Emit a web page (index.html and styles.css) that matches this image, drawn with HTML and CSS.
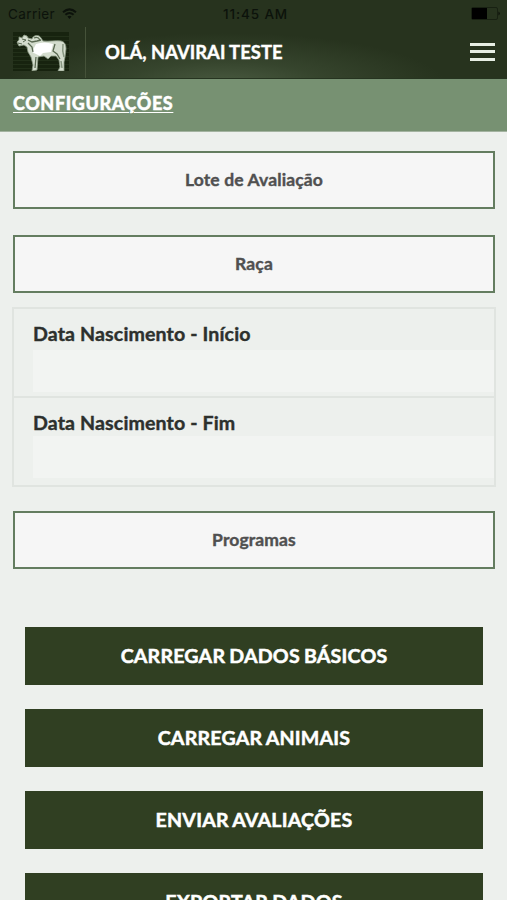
FILE: index.html
```html
<!DOCTYPE html>
<html lang="pt-BR">
<head>
<meta charset="utf-8">
<meta name="viewport" content="width=device-width">
<title>Configurações</title>
<link rel="stylesheet" href="styles.css">
</head>
<body>
<div class="app">
  <header class="header">
    <div class="status">
      <div class="carrier"><span>Carrier</span>
        <svg width="15" height="12" viewBox="0 0 15 12" fill="none" stroke="#0c120b" stroke-width="2"><path d="M1 4.2Q7.500-1.500 14 4.200M3.400 6.800Q7.500 3.200 11.600 6.800"/><path d="M5.400 8.600Q7.500 7 9.600 8.600L7.500 11Z" fill="#0c120b" stroke="none"/></svg>
      </div>
      <span class="clock">11:45 AM</span>
      <svg class="battery" width="30" height="13" viewBox="0 0 30 13"><rect x=".5" y=".5" width="26" height="12" rx="1.500" fill="none" stroke="#182112"/><path d="M1 1H16V12H1Z" fill="#000"/><path d="M27.500 4.500Q30 6.500 27.500 8.500Z" fill="#080d06"/></svg>
    </div>
    <div class="nav">
      <svg class="logo" width="56" height="39" viewBox="0 0 56 39">
        <path d="M0 0H56V39H0Z" fill="#17230f"/>
        <path d="M0 4.500H56M0 8.500H56M0 12.500H56M0 16.500H56M0 20.500H56M0 24.500H56M0 28.500H56M0 32.500H56M0 36.500H56" stroke="#223019"/>
        <path d="M4 10L6 8L6 5L9 6L11 3L14 4L15 6L19 7C20 3 26 2 28 6L30 9C36 10 42 8 48 9C52 10 53 13 53 17L52 25L51 30L51 39H45L47 35L46 28L43 24L38 24L35 27L31 24L25 25L24 38L19 39L20 33L18 25L15 20L14 15L11 13L6 14Z" fill="#d3dccd" stroke="#8b9b84" stroke-width=".8" stroke-linejoin="round"/>
        <path d="M23 12Q31 9 40 12L38 20L30 21L27 24L19 20Z" fill="#fff"/>
        <path d="M15 8L19 10L24 9L28 8M15 11L19 15L20 20M21 6Q25 4 27 8M42 12L40 19L44 22L47 27M23 25L22 36" fill="none" stroke="#596850" stroke-width="1.300"/>
        <path d="M50 12Q49 19 51 25M48 29L49 36" fill="none" stroke="#879681" stroke-width="1.500"/>
        <path d="M9 7L13 8L10 10M5 11L9 12" fill="none" stroke="#56654f"/>
      </svg>
      <div class="divider"></div>
      <h1 class="greeting">OLÁ, NAVIRAI TESTE</h1>
      <div class="menu"><i></i><i></i><i></i></div>
    </div>
  </header>
  <div class="titlebar"><a class="title">CONFIGURAÇÕES</a></div>
  <main class="content">
    <div class="select">Lote de Avaliação</div>
    <div class="select second">Raça</div>
    <div class="dates">
      <div class="date"><label>Data Nascimento - Início</label><div class="field"></div></div>
      <div class="date"><label class="end">Data Nascimento - Fim</label><div class="field"></div></div>
    </div>
    <div class="select">Programas</div>
    <div class="actions">
      <div class="action">CARREGAR DADOS BÁSICOS</div>
      <div class="action">CARREGAR ANIMAIS</div>
      <div class="action">ENVIAR AVALIAÇÕES</div>
      <div class="action">EXPORTAR DADOS</div>
    </div>
  </main>
</div>
</body>
</html>
```
FILE: styles.css
```css
* { box-sizing: border-box; }
body { margin: 0; background: #edf0ed; font-family: Lato, sans-serif; font-weight: 700; }
.app { height: 900px; overflow: hidden; }
.header {
  height: 79px;
  background: radial-gradient(ellipse 220px 52px at 225px 85px, #4a5b41 0%, rgba(62,78,53,.65) 45%, rgba(40,52,31,0) 100%), #27331e;
  border-bottom: 1px solid #263420;
}
.status { height: 27px; display: grid; grid-template-columns: 1fr auto 1fr; align-items: center; padding: 0 6px 0 8px; font-family: Inter, sans-serif; color: #0c120b; }
.carrier { display: flex; align-items: center; gap: 7px; font-size: 13.5px; font-weight: 400; letter-spacing: .4px; }
.clock { font-size: 13.5px; font-weight: 500; letter-spacing: .9px; position: relative; left: 1px; }
.battery { justify-self: end; }
.nav { height: 51px; display: flex; }
.logo { margin: 5px 0 0 13px; flex: none; }
.divider { width: 1px; margin-left: 16px; background: #455239; }
.greeting { margin: 0 0 0 19px; color: #fff; font-size: 18.4px; line-height: 50px; font-weight: 700; white-space: nowrap; letter-spacing: .05px; word-spacing: -.3px; -webkit-text-stroke: .4px #fff; }
.menu { margin: 16px 12px 0 auto; width: 25px; display: flex; flex-direction: column; gap: 4.400px; }
.menu i { height: 3px; background: #e7eee4; }
.titlebar { height: 53px; background: #779172; border-bottom: 1px solid #a3b3a0; padding-left: 13px; }
.title { color: #fff; font-size: 18px; line-height: 49px; font-weight: 900; letter-spacing: .6px; -webkit-text-stroke: .4px #fff; text-decoration: underline; text-decoration-thickness: 1px; text-underline-offset: 2px; }
.content { padding: 19px 12px 0 13px; }
.select { height: 58px; border: 2px solid #647d60; background: #f6f6f6; color: #505050; display: flex; align-items: center; justify-content: center; padding-bottom: 1px; font-size: 17.5px; letter-spacing: .12px; -webkit-text-stroke: .4px #505050; }
.second { margin-top: 26px; }
.dates { margin: 14px -1px 24px; border: 2px solid #e0e4e0; height: 180px; }
.date { height: 87px; padding: 0 0 0 19px; }
.date + .date { border-top: 2px solid #e0e4e0; height: 89px; }
.date label { display: block; height: 41px; padding-top: 12px; line-height: 26px; font-size: 19.6px; letter-spacing: .12px; color: #2d302d; -webkit-text-stroke: .4px #2d302d; }
.date .end { height: 38px; padding-top: 12px; }
.field { height: 42px; background: #f2f4f2; }
.actions { margin: 58px 12px 0; display: grid; gap: 24px; }
.action { height: 58px; background: #303f22; color: #fff; display: flex; align-items: center; justify-content: center; padding-bottom: 1px; font-size: 19.6px; letter-spacing: .2px; word-spacing: -.9px; -webkit-text-stroke: .5px #fff; }
```
